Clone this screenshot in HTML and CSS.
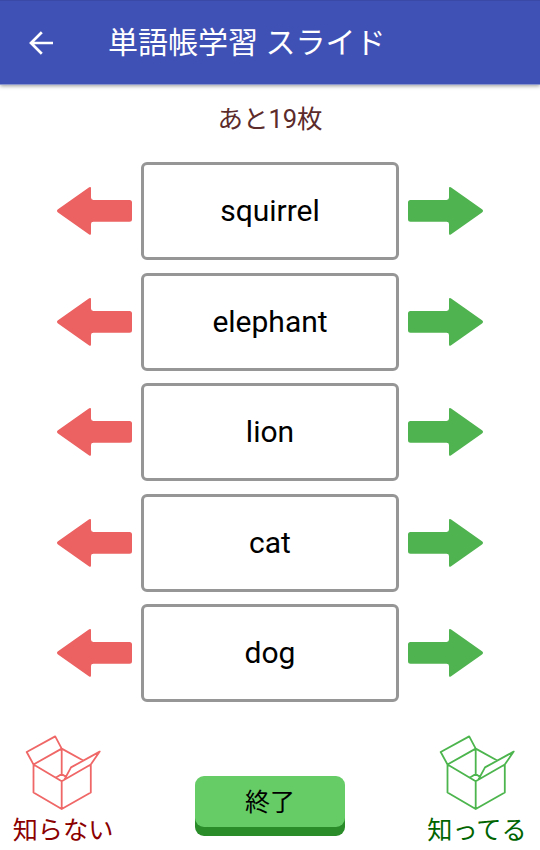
FILE: index.html
```html
<!DOCTYPE html>
<html lang="ja">
<head>
<meta charset="utf-8">
<title>単語帳学習 スライド</title>
<link rel="stylesheet" href="styles.css">
</head>
<body>
<svg width="0" height="0" class="defs" aria-hidden="true">
  <symbol id="arrow" viewBox="0 0 76 50">
    <path d="M2 23.3 33.2 1.3Q35 0.3 35 2.2V11.6Q35 14 37.4 14H73.5Q76 14 76 16.5V33.2Q76 35.7 73.5 35.7H37.4Q35 35.7 35 38.1V47.3Q35 49.7 33.2 48.4L2 26.5Q0 24.9 2 23.3Z"/>
  </symbol>
  <symbol id="box" viewBox="0 0 82 80">
    <path d="M39.7 16.6 33.2 4.4 4.7 20 11.5 32.5 39.7 16.6 61.2 28.5M11.5 32.5V60.5L39.7 77 68.8 60.5V32.5M11.5 32.5 39.7 49.3 68.8 32.5 77.7 19.6 49 35.4 42.2 48M39.7 16.6V42M33.7 45.8 39.7 42 43.8 44.8M39.7 49.3V77"/>
  </symbol>
</svg>
<header class="bar">
  <svg class="back" viewBox="0 0 26 26"><path d="M25 13H3M13.8 2.2 3 13 13.8 23.8"/></svg>
  <h1>単語帳学習 スライド</h1>
</header>
<main>
  <p class="remaining">あと19枚</p>
  <div class="cards">
    <div class="row"><svg class="arrow no"><use href="#arrow"/></svg><div class="card">squirrel</div><svg class="arrow yes"><use href="#arrow"/></svg></div>
    <div class="row"><svg class="arrow no"><use href="#arrow"/></svg><div class="card">elephant</div><svg class="arrow yes"><use href="#arrow"/></svg></div>
    <div class="row"><svg class="arrow no"><use href="#arrow"/></svg><div class="card">lion</div><svg class="arrow yes"><use href="#arrow"/></svg></div>
    <div class="row"><svg class="arrow no"><use href="#arrow"/></svg><div class="card">cat</div><svg class="arrow yes"><use href="#arrow"/></svg></div>
    <div class="row"><svg class="arrow no"><use href="#arrow"/></svg><div class="card">dog</div><svg class="arrow yes"><use href="#arrow"/></svg></div>
  </div>
</main>
<footer>
  <div class="bin unknown"><svg><use href="#box"/></svg><span>知らない</span></div>
  <button class="finish">終了</button>
  <div class="bin known"><svg><use href="#box"/></svg><span>知ってる</span></div>
</footer>
</body>
</html>
```

FILE: styles.css
```css
* { box-sizing: border-box; }
body {
  margin: 0;
  height: 850px;
  overflow: hidden;
  display: flex;
  flex-direction: column;
  background: #fff;
  font-family: Roboto, "Noto Sans CJK JP", sans-serif;
}
.defs { position: absolute; }
.bar {
  height: 85px;
  flex: none;
  display: flex;
  align-items: center;
  padding-left: 27px;
  background: #3f51b5;
  border-top: 1px solid #3949a5;
  border-bottom: 1px solid #8a94cd;
  box-shadow: 0 1px 4px rgba(0, 0, 0, .4);
  color: #fff;
}
.back { width: 28px; height: 26px; fill: none; stroke: #fff; stroke-width: 2.7; }
h1 { margin: 0 0 0 53px; font-size: 30px; line-height: 40px; font-weight: 400; white-space: pre; }
.remaining {
  margin: 17px 0 0;
  height: 34px;
  text-align: center;
  font-size: 25.5px;
  line-height: 34px;
  color: #5c2b2b;
}
.cards { display: flex; flex-direction: column; gap: 12.5px; margin-top: 26px; }
.row { display: flex; align-items: center; justify-content: center; gap: 9px; height: 98px; }
.card {
  width: 258px;
  height: 98px;
  border: 3px solid #969696;
  border-radius: 6px;
  display: flex;
  align-items: center;
  justify-content: center;
  padding-bottom: 1px;
  font-size: 30px;
  color: #000;
}
.arrow { width: 76px; height: 50px; }
.no { fill: #ec6161; }
.yes { fill: #4fb34f; transform: scaleX(-1); }
footer { display: flex; justify-content: space-between; padding: 0 12px; margin-top: 30px; }
.bin { width: 102px; display: flex; flex-direction: column; align-items: center; }
.bin svg { width: 82px; height: 80px; fill: none; stroke-width: 1.8; stroke-linejoin: round; }
.bin span { font-size: 25.2px; line-height: 34px; margin-top: 2px; white-space: nowrap; }
.unknown { color: #8b0000; }
.unknown svg { stroke: #f06767; }
.known { color: #006400; }
.known svg { stroke: #4db54d; }
.finish {
  width: 150px;
  height: 51px;
  margin-top: 44px;
  padding: 0 0 3px;
  border: 0;
  border-radius: 9px;
  background: #66cc66;
  box-shadow: 0 9px #298c29;
  font: 25px Roboto, "Noto Sans CJK JP", sans-serif;
  color: #000;
}
```
